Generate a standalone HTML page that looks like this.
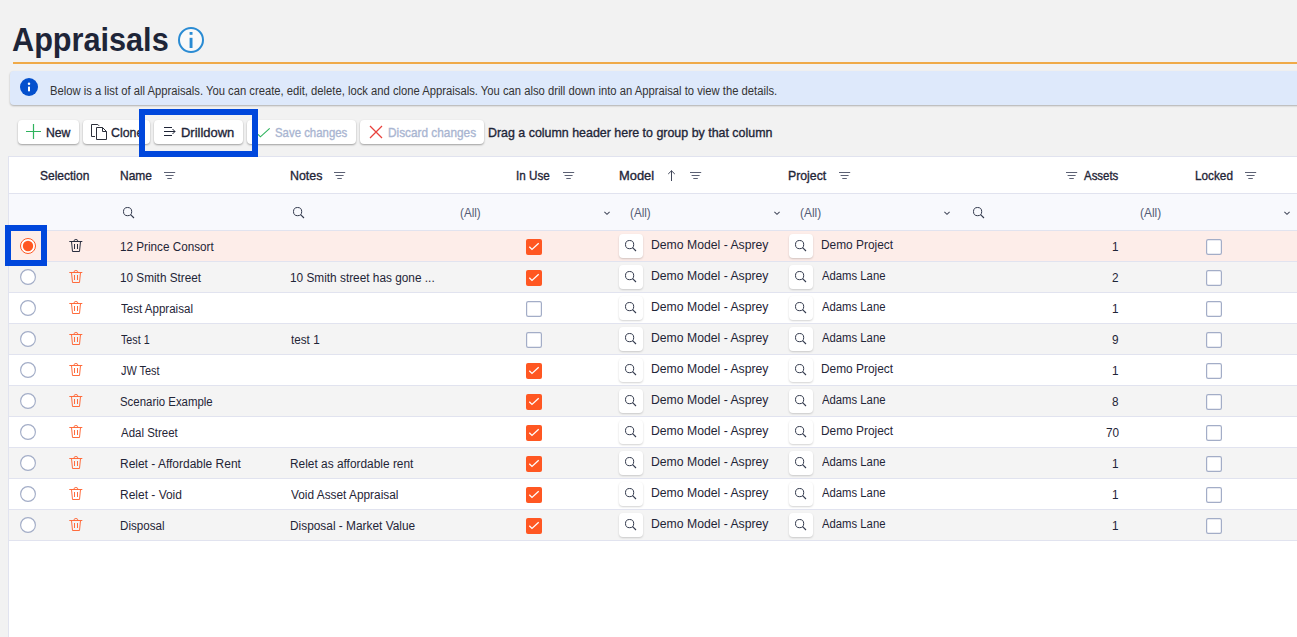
<!DOCTYPE html><html><head><meta charset="utf-8"><style>
html,body{margin:0;padding:0;}
body{width:1297px;height:637px;overflow:hidden;background:#f2f2f2;position:relative;font-family:"Liberation Sans", sans-serif;}
.t{position:absolute;white-space:nowrap;transform-origin:0 0;}
.b{position:absolute;box-sizing:border-box;}
svg.b{overflow:visible;}
</style></head><body>
<div class="t" style="left:12.10px;top:22px;font-size:34px;line-height:34px;color:#1e2538;font-weight:700;transform:scaleX(0.9012);">Appraisals</div>
<svg class="b" style="left:177px;top:26px" width="28" height="28" viewBox="0 0 28 28"><circle cx="14" cy="14" r="12" fill="#f9f9f9" stroke="#2a8bd3" stroke-width="2"/><rect x="12.6" y="6" width="2.9" height="2.8" fill="#2a8bd3"/><rect x="12.6" y="11.8" width="2.9" height="10.2" fill="#2a8bd3"/></svg>
<div class="b" style="left:13px;top:62px;width:1284px;height:2px;background:#f0aa48;"></div>
<div class="b" style="left:10px;top:71px;width:1297px;height:34px;background:#dee9fb;border-radius:4px;box-shadow:0 1px 2px rgba(0,0,0,.28);"></div>
<svg class="b" style="left:20px;top:78px" width="18" height="18" viewBox="0 0 18 18"><circle cx="9" cy="9" r="9" fill="#0450cd"/><circle cx="9" cy="5.7" r="1.25" fill="#fff"/><rect x="8" y="8.6" width="2" height="4.7" fill="#fff"/></svg>
<div class="t" style="left:49.60px;top:85px;font-size:12.5px;line-height:12.5px;color:#333;transform:scaleX(0.8990);">Below is a list of all Appraisals. You can create, edit, delete, lock and clone Appraisals. You can also drill down into an Appraisal to view the details.</div>
<div class="b" style="left:18px;top:120px;width:61px;height:24px;background:#fff;border-radius:4px;box-shadow:0 1px 2px rgba(0,0,0,.35);"></div>
<svg class="b" style="left:26px;top:124px" width="15" height="15" viewBox="0 0 15 15"><path d="M7.5 0V15M0 7.5H15" stroke="#2fb35d" stroke-width="1.2" fill="none"/></svg>
<div class="t" style="left:45.86px;top:126px;font-size:13px;line-height:13px;color:#1e2538;-webkit-text-stroke:0.35px #1e2538;transform:scaleX(0.9400);">New</div>
<div class="b" style="left:83px;top:120px;width:67px;height:24px;background:#fff;border-radius:4px;box-shadow:0 1px 2px rgba(0,0,0,.35);"></div>
<svg class="b" style="left:91px;top:124px" width="16" height="16" viewBox="0 0 16 16"><path d="M4 12.5H0.5V0.5H6.8L8.2 1.9" stroke="#2b2f3a" stroke-width="1" fill="none"/><path d="M5.5 3.5H11.5L15.5 7.5V15.5H5.5Z M11.5 3.5V7.5H15.5" stroke="#2b2f3a" stroke-width="1" fill="#fff" stroke-linejoin="miter"/></svg>
<div class="t" style="left:111.20px;top:126px;font-size:13px;line-height:13px;color:#1e2538;-webkit-text-stroke:0.35px #1e2538;transform:scaleX(0.9500);">Clone</div>
<div class="b" style="left:154px;top:120px;width:89px;height:24px;background:#fff;border-radius:4px;box-shadow:0 1px 2px rgba(0,0,0,.35);"></div>
<svg class="b" style="left:164px;top:127px" width="12" height="10" viewBox="0 0 12 10"><path d="M0 0.5H8M0 4.5H11M0 8.5H8M8.5 2L11 4.5L8.5 7" stroke="#1f2537" stroke-width="1" fill="none"/></svg>
<div class="t" style="left:181.40px;top:126px;font-size:13px;line-height:13px;color:#1e2538;-webkit-text-stroke:0.35px #1e2538;transform:scaleX(0.9962);">Drilldown</div>
<div class="b" style="left:247px;top:120px;width:109px;height:24px;background:#fff;border-radius:4px;box-shadow:0 1px 2px rgba(0,0,0,.35);"></div>
<svg class="b" style="left:257px;top:127px" width="14" height="11" viewBox="0 0 14 11"><path d="M1 7.3L3.4 9.8L12.7 1.3" stroke="#2fb35d" stroke-width="1.15" fill="none"/></svg>
<div class="t" style="left:275.00px;top:126px;font-size:13px;line-height:13px;color:#a9b5d1;-webkit-text-stroke:0.35px #a9b5d1;transform:scaleX(0.8771);">Save changes</div>
<div class="b" style="left:360px;top:120px;width:124px;height:24px;background:#fff;border-radius:4px;box-shadow:0 1px 2px rgba(0,0,0,.35);"></div>
<svg class="b" style="left:369px;top:125px" width="14" height="14" viewBox="0 0 14 14"><path d="M1 1L13 13M13 1L1 13" stroke="#e8413c" stroke-width="1.25" fill="none"/></svg>
<div class="t" style="left:387.79px;top:126px;font-size:13px;line-height:13px;color:#a9b5d1;-webkit-text-stroke:0.35px #a9b5d1;transform:scaleX(0.9094);">Discard changes</div>
<div class="t" style="left:488.14px;top:126px;font-size:13px;line-height:13px;color:#1e2538;-webkit-text-stroke:0.35px #1e2538;transform:scaleX(0.9552);">Drag a column header here to group by that column</div>
<div class="b" style="left:8px;top:156px;width:1297px;height:481px;background:#fff;border-left:1px solid #e1e3ef;border-top:1px solid #e1e3ef;"></div>
<div class="b" style="left:9px;top:193px;width:1297px;height:1px;background:#e1e3ef;"></div>
<div class="b" style="left:9px;top:194px;width:1297px;height:36px;background:#f8f9fd;"></div>
<div class="b" style="left:9px;top:230px;width:1297px;height:1px;background:#e1e3ef;"></div>
<div class="t" style="left:40.00px;top:169px;font-size:13px;line-height:13px;color:#1f2537;-webkit-text-stroke:0.35px #1f2537;transform:scaleX(0.9226);">Selection</div>
<div class="t" style="left:119.88px;top:169px;font-size:13px;line-height:13px;color:#1f2537;-webkit-text-stroke:0.35px #1f2537;transform:scaleX(0.9206);">Name</div>
<svg class="b" style="left:164px;top:172px" width="12" height="8" viewBox="0 0 12 8"><path d="M0 0.5H11.2M1.6 3.5H9.6M3.3 6.5H7.8" stroke="#5c6174" stroke-width="1" fill="none"/></svg>
<div class="t" style="left:289.55px;top:169px;font-size:13px;line-height:13px;color:#1f2537;-webkit-text-stroke:0.35px #1f2537;transform:scaleX(0.9545);">Notes</div>
<svg class="b" style="left:334px;top:172px" width="12" height="8" viewBox="0 0 12 8"><path d="M0 0.5H11.2M1.6 3.5H9.6M3.3 6.5H7.8" stroke="#5c6174" stroke-width="1" fill="none"/></svg>
<div class="t" style="left:516.40px;top:169px;font-size:13px;line-height:13px;color:#1f2537;-webkit-text-stroke:0.35px #1f2537;transform:scaleX(0.8973);">In Use</div>
<svg class="b" style="left:562.5px;top:172px" width="12" height="8" viewBox="0 0 12 8"><path d="M0 0.5H11.2M1.6 3.5H9.6M3.3 6.5H7.8" stroke="#5c6174" stroke-width="1" fill="none"/></svg>
<div class="t" style="left:618.61px;top:169px;font-size:13px;line-height:13px;color:#1f2537;-webkit-text-stroke:0.35px #1f2537;transform:scaleX(0.9912);">Model</div>
<svg class="b" style="left:667px;top:170px" width="9" height="12" viewBox="0 0 9 12"><path d="M4.5 0.6V11M1.2 4L4.5 0.8L7.8 4" stroke="#404659" stroke-width="1" fill="none"/></svg>
<svg class="b" style="left:689.5px;top:172px" width="12" height="8" viewBox="0 0 12 8"><path d="M0 0.5H11.2M1.6 3.5H9.6M3.3 6.5H7.8" stroke="#5c6174" stroke-width="1" fill="none"/></svg>
<div class="t" style="left:788.15px;top:169px;font-size:13px;line-height:13px;color:#1f2537;-webkit-text-stroke:0.35px #1f2537;transform:scaleX(0.9450);">Project</div>
<svg class="b" style="left:838.5px;top:172px" width="12" height="8" viewBox="0 0 12 8"><path d="M0 0.5H11.2M1.6 3.5H9.6M3.3 6.5H7.8" stroke="#5c6174" stroke-width="1" fill="none"/></svg>
<svg class="b" style="left:1065.5px;top:172px" width="12" height="8" viewBox="0 0 12 8"><path d="M0 0.5H11.2M1.6 3.5H9.6M3.3 6.5H7.8" stroke="#5c6174" stroke-width="1" fill="none"/></svg>
<div class="t" style="left:1084.00px;top:169px;font-size:13px;line-height:13px;color:#1f2537;-webkit-text-stroke:0.35px #1f2537;transform:scaleX(0.8795);">Assets</div>
<div class="t" style="left:1194.60px;top:169px;font-size:13px;line-height:13px;color:#1f2537;-webkit-text-stroke:0.35px #1f2537;transform:scaleX(0.9049);">Locked</div>
<svg class="b" style="left:1245px;top:172px" width="12" height="8" viewBox="0 0 12 8"><path d="M0 0.5H11.2M1.6 3.5H9.6M3.3 6.5H7.8" stroke="#5c6174" stroke-width="1" fill="none"/></svg>
<svg class="b" style="left:123px;top:207px" width="11" height="11" viewBox="0 0 11 11"><circle cx="4.6" cy="4.6" r="4.1" stroke="#333a4d" stroke-width="1" fill="none"/><path d="M7.6 7.6L11 11" stroke="#333a4d" stroke-width="1.1" fill="none"/></svg>
<svg class="b" style="left:293px;top:207px" width="11" height="11" viewBox="0 0 11 11"><circle cx="4.6" cy="4.6" r="4.1" stroke="#333a4d" stroke-width="1" fill="none"/><path d="M7.6 7.6L11 11" stroke="#333a4d" stroke-width="1.1" fill="none"/></svg>
<div class="t" style="left:459.77px;top:207px;font-size:12.5px;line-height:12.5px;color:#535b75;transform:scaleX(0.9333);">(All)</div>
<svg class="b" style="left:604px;top:210.5px" width="7" height="4" viewBox="0 0 7 4"><path d="M0.4 0.9L3 3.3L5.6 0.9" stroke="#404659" stroke-width="1.05" fill="none"/></svg>
<div class="t" style="left:629.57px;top:207px;font-size:12.5px;line-height:12.5px;color:#535b75;transform:scaleX(0.9333);">(All)</div>
<svg class="b" style="left:774px;top:210.5px" width="7" height="4" viewBox="0 0 7 4"><path d="M0.4 0.9L3 3.3L5.6 0.9" stroke="#404659" stroke-width="1.05" fill="none"/></svg>
<div class="t" style="left:799.55px;top:207px;font-size:12.5px;line-height:12.5px;color:#535b75;transform:scaleX(0.9524);">(All)</div>
<svg class="b" style="left:943.5px;top:210.5px" width="7" height="4" viewBox="0 0 7 4"><path d="M0.4 0.9L3 3.3L5.6 0.9" stroke="#404659" stroke-width="1.05" fill="none"/></svg>
<svg class="b" style="left:973px;top:207px" width="11" height="11" viewBox="0 0 11 11"><circle cx="4.6" cy="4.6" r="4.1" stroke="#333a4d" stroke-width="1" fill="none"/><path d="M7.6 7.6L11 11" stroke="#333a4d" stroke-width="1.1" fill="none"/></svg>
<div class="t" style="left:1139.55px;top:207px;font-size:12.5px;line-height:12.5px;color:#535b75;transform:scaleX(0.9524);">(All)</div>
<svg class="b" style="left:1284px;top:210.5px" width="7" height="4" viewBox="0 0 7 4"><path d="M0.4 0.9L3 3.3L5.6 0.9" stroke="#404659" stroke-width="1.05" fill="none"/></svg>
<div class="b" style="left:9px;top:231px;width:1297px;height:30px;background:#fdede9;"></div>
<div class="b" style="left:9px;top:261px;width:1297px;height:1px;background:#e1e3ef;"></div>
<svg class="b" style="left:20px;top:238px" width="16" height="16" viewBox="0 0 16 16"><circle cx="8" cy="8" r="7.5" fill="#fff" stroke="#ff5722" stroke-width="1"/><circle cx="8" cy="8" r="5.2" fill="#ff5722"/></svg>
<svg class="b" style="left:69px;top:239px" width="14" height="14" viewBox="0 0 14 14"><path d="M0.3 2.5H13.3M5.1 2.5V1.8Q5.1 0.5 6.9 0.5Q8.7 0.5 8.7 1.8V2.5M2.5 2.6L3.5 12.5H10.5L11.5 2.6M5.5 5V10M8.5 5V10" stroke="#1f2537" stroke-width="0.95" fill="none"/></svg>
<div class="t" style="left:120.06px;top:241px;font-size:12.5px;line-height:12.5px;color:#1f2537;transform:scaleX(0.9364);">12 Prince Consort</div>
<svg class="b" style="left:526px;top:239px" width="16" height="16" viewBox="0 0 16 16"><rect x="0" y="0" width="16" height="16" rx="2" fill="#ff5722"/><path d="M3.3 7.7L6 10.4L12.7 4.2" stroke="#fff" stroke-width="1.3" fill="none"/></svg>
<div class="b" style="left:619px;top:234px;width:24px;height:24px;background:#fff;border-radius:4px;box-shadow:0 1px 2px rgba(0,0,0,.18);"></div>
<svg class="b" style="left:625px;top:240px" width="11" height="11" viewBox="0 0 11 11"><circle cx="4.6" cy="4.6" r="4.1" stroke="#333a4d" stroke-width="1" fill="none"/><path d="M7.6 7.6L11 11" stroke="#333a4d" stroke-width="1.1" fill="none"/></svg>
<div class="t" style="left:651.02px;top:239px;font-size:12.5px;line-height:12.5px;color:#1f2537;transform:scaleX(0.9773);">Demo Model - Asprey</div>
<div class="b" style="left:789px;top:234px;width:24px;height:24px;background:#fff;border-radius:4px;box-shadow:0 1px 2px rgba(0,0,0,.18);"></div>
<svg class="b" style="left:795px;top:240px" width="11" height="11" viewBox="0 0 11 11"><circle cx="4.6" cy="4.6" r="4.1" stroke="#333a4d" stroke-width="1" fill="none"/><path d="M7.6 7.6L11 11" stroke="#333a4d" stroke-width="1.1" fill="none"/></svg>
<div class="t" style="left:821.05px;top:239px;font-size:12.5px;line-height:12.5px;color:#1f2537;transform:scaleX(0.9520);">Demo Project</div>
<div class="t" style="left:1112.42px;top:241px;font-size:12.5px;line-height:12.5px;color:#1f2537;transform:scaleX(0.9400);">1</div>
<svg class="b" style="left:1206px;top:239px" width="16" height="16" viewBox="0 0 16 16"><rect x="0.6" y="0.6" width="14.8" height="14.8" rx="1.6" fill="#fff" stroke="#a3adc7" stroke-width="1.2"/></svg>
<div class="b" style="left:9px;top:262px;width:1297px;height:30px;background:#f4f4f4;"></div>
<div class="b" style="left:9px;top:292px;width:1297px;height:1px;background:#e1e3ef;"></div>
<svg class="b" style="left:20px;top:269px" width="16" height="16" viewBox="0 0 16 16"><circle cx="8" cy="8" r="7.4" fill="#fff" stroke="#a3adc7" stroke-width="1.15"/></svg>
<svg class="b" style="left:69px;top:270px" width="14" height="14" viewBox="0 0 14 14"><path d="M0.3 2.5H13.3M5.1 2.5V1.8Q5.1 0.5 6.9 0.5Q8.7 0.5 8.7 1.8V2.5M2.5 2.6L3.5 12.5H10.5L11.5 2.6M5.5 5V10M8.5 5V10" stroke="#ff6433" stroke-width="0.95" fill="none"/></svg>
<div class="t" style="left:120.06px;top:272px;font-size:12.5px;line-height:12.5px;color:#1f2537;transform:scaleX(0.9412);">10 Smith Street</div>
<div class="t" style="left:289.55px;top:272px;font-size:12.5px;line-height:12.5px;color:#1f2537;transform:scaleX(0.9464);">10 Smith street has gone ...</div>
<svg class="b" style="left:526px;top:270px" width="16" height="16" viewBox="0 0 16 16"><rect x="0" y="0" width="16" height="16" rx="2" fill="#ff5722"/><path d="M3.3 7.7L6 10.4L12.7 4.2" stroke="#fff" stroke-width="1.3" fill="none"/></svg>
<div class="b" style="left:619px;top:265px;width:24px;height:24px;background:#fff;border-radius:4px;box-shadow:0 1px 2px rgba(0,0,0,.18);"></div>
<svg class="b" style="left:625px;top:271px" width="11" height="11" viewBox="0 0 11 11"><circle cx="4.6" cy="4.6" r="4.1" stroke="#333a4d" stroke-width="1" fill="none"/><path d="M7.6 7.6L11 11" stroke="#333a4d" stroke-width="1.1" fill="none"/></svg>
<div class="t" style="left:651.02px;top:270px;font-size:12.5px;line-height:12.5px;color:#1f2537;transform:scaleX(0.9773);">Demo Model - Asprey</div>
<div class="b" style="left:789px;top:265px;width:24px;height:24px;background:#fff;border-radius:4px;box-shadow:0 1px 2px rgba(0,0,0,.18);"></div>
<svg class="b" style="left:795px;top:271px" width="11" height="11" viewBox="0 0 11 11"><circle cx="4.6" cy="4.6" r="4.1" stroke="#333a4d" stroke-width="1" fill="none"/><path d="M7.6 7.6L11 11" stroke="#333a4d" stroke-width="1.1" fill="none"/></svg>
<div class="t" style="left:822.00px;top:270px;font-size:12.5px;line-height:12.5px;color:#1f2537;transform:scaleX(0.9043);">Adams Lane</div>
<div class="t" style="left:1112.42px;top:272px;font-size:12.5px;line-height:12.5px;color:#1f2537;transform:scaleX(0.9400);">2</div>
<svg class="b" style="left:1206px;top:270px" width="16" height="16" viewBox="0 0 16 16"><rect x="0.6" y="0.6" width="14.8" height="14.8" rx="1.6" fill="#fff" stroke="#a3adc7" stroke-width="1.2"/></svg>
<div class="b" style="left:9px;top:293px;width:1297px;height:30px;background:#ffffff;"></div>
<div class="b" style="left:9px;top:323px;width:1297px;height:1px;background:#e1e3ef;"></div>
<svg class="b" style="left:20px;top:300px" width="16" height="16" viewBox="0 0 16 16"><circle cx="8" cy="8" r="7.4" fill="#fff" stroke="#a3adc7" stroke-width="1.15"/></svg>
<svg class="b" style="left:69px;top:301px" width="14" height="14" viewBox="0 0 14 14"><path d="M0.3 2.5H13.3M5.1 2.5V1.8Q5.1 0.5 6.9 0.5Q8.7 0.5 8.7 1.8V2.5M2.5 2.6L3.5 12.5H10.5L11.5 2.6M5.5 5V10M8.5 5V10" stroke="#ff6433" stroke-width="0.95" fill="none"/></svg>
<div class="t" style="left:121.00px;top:303px;font-size:12.5px;line-height:12.5px;color:#1f2537;transform:scaleX(0.9247);">Test Appraisal</div>
<svg class="b" style="left:526px;top:301px" width="16" height="16" viewBox="0 0 16 16"><rect x="0.6" y="0.6" width="14.8" height="14.8" rx="1.6" fill="#fff" stroke="#a3adc7" stroke-width="1.2"/></svg>
<div class="b" style="left:619px;top:296px;width:24px;height:24px;background:#fff;border-radius:4px;box-shadow:0 1px 2px rgba(0,0,0,.18);"></div>
<svg class="b" style="left:625px;top:302px" width="11" height="11" viewBox="0 0 11 11"><circle cx="4.6" cy="4.6" r="4.1" stroke="#333a4d" stroke-width="1" fill="none"/><path d="M7.6 7.6L11 11" stroke="#333a4d" stroke-width="1.1" fill="none"/></svg>
<div class="t" style="left:651.02px;top:301px;font-size:12.5px;line-height:12.5px;color:#1f2537;transform:scaleX(0.9773);">Demo Model - Asprey</div>
<div class="b" style="left:789px;top:296px;width:24px;height:24px;background:#fff;border-radius:4px;box-shadow:0 1px 2px rgba(0,0,0,.18);"></div>
<svg class="b" style="left:795px;top:302px" width="11" height="11" viewBox="0 0 11 11"><circle cx="4.6" cy="4.6" r="4.1" stroke="#333a4d" stroke-width="1" fill="none"/><path d="M7.6 7.6L11 11" stroke="#333a4d" stroke-width="1.1" fill="none"/></svg>
<div class="t" style="left:822.00px;top:301px;font-size:12.5px;line-height:12.5px;color:#1f2537;transform:scaleX(0.9043);">Adams Lane</div>
<div class="t" style="left:1112.42px;top:303px;font-size:12.5px;line-height:12.5px;color:#1f2537;transform:scaleX(0.9400);">1</div>
<svg class="b" style="left:1206px;top:301px" width="16" height="16" viewBox="0 0 16 16"><rect x="0.6" y="0.6" width="14.8" height="14.8" rx="1.6" fill="#fff" stroke="#a3adc7" stroke-width="1.2"/></svg>
<div class="b" style="left:9px;top:324px;width:1297px;height:30px;background:#f4f4f4;"></div>
<div class="b" style="left:9px;top:354px;width:1297px;height:1px;background:#e1e3ef;"></div>
<svg class="b" style="left:20px;top:331px" width="16" height="16" viewBox="0 0 16 16"><circle cx="8" cy="8" r="7.4" fill="#fff" stroke="#a3adc7" stroke-width="1.15"/></svg>
<svg class="b" style="left:69px;top:332px" width="14" height="14" viewBox="0 0 14 14"><path d="M0.3 2.5H13.3M5.1 2.5V1.8Q5.1 0.5 6.9 0.5Q8.7 0.5 8.7 1.8V2.5M2.5 2.6L3.5 12.5H10.5L11.5 2.6M5.5 5V10M8.5 5V10" stroke="#ff6433" stroke-width="0.95" fill="none"/></svg>
<div class="t" style="left:121.00px;top:334px;font-size:12.5px;line-height:12.5px;color:#1f2537;transform:scaleX(0.8576);">Test 1</div>
<div class="t" style="left:290.50px;top:334px;font-size:12.5px;line-height:12.5px;color:#1f2537;transform:scaleX(0.9367);">test 1</div>
<svg class="b" style="left:526px;top:332px" width="16" height="16" viewBox="0 0 16 16"><rect x="0.6" y="0.6" width="14.8" height="14.8" rx="1.6" fill="#fff" stroke="#a3adc7" stroke-width="1.2"/></svg>
<div class="b" style="left:619px;top:327px;width:24px;height:24px;background:#fff;border-radius:4px;box-shadow:0 1px 2px rgba(0,0,0,.18);"></div>
<svg class="b" style="left:625px;top:333px" width="11" height="11" viewBox="0 0 11 11"><circle cx="4.6" cy="4.6" r="4.1" stroke="#333a4d" stroke-width="1" fill="none"/><path d="M7.6 7.6L11 11" stroke="#333a4d" stroke-width="1.1" fill="none"/></svg>
<div class="t" style="left:651.02px;top:332px;font-size:12.5px;line-height:12.5px;color:#1f2537;transform:scaleX(0.9773);">Demo Model - Asprey</div>
<div class="b" style="left:789px;top:327px;width:24px;height:24px;background:#fff;border-radius:4px;box-shadow:0 1px 2px rgba(0,0,0,.18);"></div>
<svg class="b" style="left:795px;top:333px" width="11" height="11" viewBox="0 0 11 11"><circle cx="4.6" cy="4.6" r="4.1" stroke="#333a4d" stroke-width="1" fill="none"/><path d="M7.6 7.6L11 11" stroke="#333a4d" stroke-width="1.1" fill="none"/></svg>
<div class="t" style="left:822.00px;top:332px;font-size:12.5px;line-height:12.5px;color:#1f2537;transform:scaleX(0.9043);">Adams Lane</div>
<div class="t" style="left:1112.42px;top:334px;font-size:12.5px;line-height:12.5px;color:#1f2537;transform:scaleX(0.9400);">9</div>
<svg class="b" style="left:1206px;top:332px" width="16" height="16" viewBox="0 0 16 16"><rect x="0.6" y="0.6" width="14.8" height="14.8" rx="1.6" fill="#fff" stroke="#a3adc7" stroke-width="1.2"/></svg>
<div class="b" style="left:9px;top:355px;width:1297px;height:30px;background:#ffffff;"></div>
<div class="b" style="left:9px;top:385px;width:1297px;height:1px;background:#e1e3ef;"></div>
<svg class="b" style="left:20px;top:362px" width="16" height="16" viewBox="0 0 16 16"><circle cx="8" cy="8" r="7.4" fill="#fff" stroke="#a3adc7" stroke-width="1.15"/></svg>
<svg class="b" style="left:69px;top:363px" width="14" height="14" viewBox="0 0 14 14"><path d="M0.3 2.5H13.3M5.1 2.5V1.8Q5.1 0.5 6.9 0.5Q8.7 0.5 8.7 1.8V2.5M2.5 2.6L3.5 12.5H10.5L11.5 2.6M5.5 5V10M8.5 5V10" stroke="#ff6433" stroke-width="0.95" fill="none"/></svg>
<div class="t" style="left:121.00px;top:365px;font-size:12.5px;line-height:12.5px;color:#1f2537;transform:scaleX(0.8727);">JW Test</div>
<svg class="b" style="left:526px;top:363px" width="16" height="16" viewBox="0 0 16 16"><rect x="0" y="0" width="16" height="16" rx="2" fill="#ff5722"/><path d="M3.3 7.7L6 10.4L12.7 4.2" stroke="#fff" stroke-width="1.3" fill="none"/></svg>
<div class="b" style="left:619px;top:358px;width:24px;height:24px;background:#fff;border-radius:4px;box-shadow:0 1px 2px rgba(0,0,0,.18);"></div>
<svg class="b" style="left:625px;top:364px" width="11" height="11" viewBox="0 0 11 11"><circle cx="4.6" cy="4.6" r="4.1" stroke="#333a4d" stroke-width="1" fill="none"/><path d="M7.6 7.6L11 11" stroke="#333a4d" stroke-width="1.1" fill="none"/></svg>
<div class="t" style="left:651.02px;top:363px;font-size:12.5px;line-height:12.5px;color:#1f2537;transform:scaleX(0.9773);">Demo Model - Asprey</div>
<div class="b" style="left:789px;top:358px;width:24px;height:24px;background:#fff;border-radius:4px;box-shadow:0 1px 2px rgba(0,0,0,.18);"></div>
<svg class="b" style="left:795px;top:364px" width="11" height="11" viewBox="0 0 11 11"><circle cx="4.6" cy="4.6" r="4.1" stroke="#333a4d" stroke-width="1" fill="none"/><path d="M7.6 7.6L11 11" stroke="#333a4d" stroke-width="1.1" fill="none"/></svg>
<div class="t" style="left:821.05px;top:363px;font-size:12.5px;line-height:12.5px;color:#1f2537;transform:scaleX(0.9520);">Demo Project</div>
<div class="t" style="left:1112.42px;top:365px;font-size:12.5px;line-height:12.5px;color:#1f2537;transform:scaleX(0.9400);">1</div>
<svg class="b" style="left:1206px;top:363px" width="16" height="16" viewBox="0 0 16 16"><rect x="0.6" y="0.6" width="14.8" height="14.8" rx="1.6" fill="#fff" stroke="#a3adc7" stroke-width="1.2"/></svg>
<div class="b" style="left:9px;top:386px;width:1297px;height:30px;background:#f4f4f4;"></div>
<div class="b" style="left:9px;top:416px;width:1297px;height:1px;background:#e1e3ef;"></div>
<svg class="b" style="left:20px;top:393px" width="16" height="16" viewBox="0 0 16 16"><circle cx="8" cy="8" r="7.4" fill="#fff" stroke="#a3adc7" stroke-width="1.15"/></svg>
<svg class="b" style="left:69px;top:394px" width="14" height="14" viewBox="0 0 14 14"><path d="M0.3 2.5H13.3M5.1 2.5V1.8Q5.1 0.5 6.9 0.5Q8.7 0.5 8.7 1.8V2.5M2.5 2.6L3.5 12.5H10.5L11.5 2.6M5.5 5V10M8.5 5V10" stroke="#ff6433" stroke-width="0.95" fill="none"/></svg>
<div class="t" style="left:120.09px;top:396px;font-size:12.5px;line-height:12.5px;color:#1f2537;transform:scaleX(0.9140);">Scenario Example</div>
<svg class="b" style="left:526px;top:394px" width="16" height="16" viewBox="0 0 16 16"><rect x="0" y="0" width="16" height="16" rx="2" fill="#ff5722"/><path d="M3.3 7.7L6 10.4L12.7 4.2" stroke="#fff" stroke-width="1.3" fill="none"/></svg>
<div class="b" style="left:619px;top:389px;width:24px;height:24px;background:#fff;border-radius:4px;box-shadow:0 1px 2px rgba(0,0,0,.18);"></div>
<svg class="b" style="left:625px;top:395px" width="11" height="11" viewBox="0 0 11 11"><circle cx="4.6" cy="4.6" r="4.1" stroke="#333a4d" stroke-width="1" fill="none"/><path d="M7.6 7.6L11 11" stroke="#333a4d" stroke-width="1.1" fill="none"/></svg>
<div class="t" style="left:651.02px;top:394px;font-size:12.5px;line-height:12.5px;color:#1f2537;transform:scaleX(0.9773);">Demo Model - Asprey</div>
<div class="b" style="left:789px;top:389px;width:24px;height:24px;background:#fff;border-radius:4px;box-shadow:0 1px 2px rgba(0,0,0,.18);"></div>
<svg class="b" style="left:795px;top:395px" width="11" height="11" viewBox="0 0 11 11"><circle cx="4.6" cy="4.6" r="4.1" stroke="#333a4d" stroke-width="1" fill="none"/><path d="M7.6 7.6L11 11" stroke="#333a4d" stroke-width="1.1" fill="none"/></svg>
<div class="t" style="left:822.00px;top:394px;font-size:12.5px;line-height:12.5px;color:#1f2537;transform:scaleX(0.9043);">Adams Lane</div>
<div class="t" style="left:1112.42px;top:396px;font-size:12.5px;line-height:12.5px;color:#1f2537;transform:scaleX(0.9400);">8</div>
<svg class="b" style="left:1206px;top:394px" width="16" height="16" viewBox="0 0 16 16"><rect x="0.6" y="0.6" width="14.8" height="14.8" rx="1.6" fill="#fff" stroke="#a3adc7" stroke-width="1.2"/></svg>
<div class="b" style="left:9px;top:417px;width:1297px;height:30px;background:#ffffff;"></div>
<div class="b" style="left:9px;top:447px;width:1297px;height:1px;background:#e1e3ef;"></div>
<svg class="b" style="left:20px;top:424px" width="16" height="16" viewBox="0 0 16 16"><circle cx="8" cy="8" r="7.4" fill="#fff" stroke="#a3adc7" stroke-width="1.15"/></svg>
<svg class="b" style="left:69px;top:425px" width="14" height="14" viewBox="0 0 14 14"><path d="M0.3 2.5H13.3M5.1 2.5V1.8Q5.1 0.5 6.9 0.5Q8.7 0.5 8.7 1.8V2.5M2.5 2.6L3.5 12.5H10.5L11.5 2.6M5.5 5V10M8.5 5V10" stroke="#ff6433" stroke-width="0.95" fill="none"/></svg>
<div class="t" style="left:121.00px;top:427px;font-size:12.5px;line-height:12.5px;color:#1f2537;transform:scaleX(0.9177);">Adal Street</div>
<svg class="b" style="left:526px;top:425px" width="16" height="16" viewBox="0 0 16 16"><rect x="0" y="0" width="16" height="16" rx="2" fill="#ff5722"/><path d="M3.3 7.7L6 10.4L12.7 4.2" stroke="#fff" stroke-width="1.3" fill="none"/></svg>
<div class="b" style="left:619px;top:420px;width:24px;height:24px;background:#fff;border-radius:4px;box-shadow:0 1px 2px rgba(0,0,0,.18);"></div>
<svg class="b" style="left:625px;top:426px" width="11" height="11" viewBox="0 0 11 11"><circle cx="4.6" cy="4.6" r="4.1" stroke="#333a4d" stroke-width="1" fill="none"/><path d="M7.6 7.6L11 11" stroke="#333a4d" stroke-width="1.1" fill="none"/></svg>
<div class="t" style="left:651.02px;top:425px;font-size:12.5px;line-height:12.5px;color:#1f2537;transform:scaleX(0.9773);">Demo Model - Asprey</div>
<div class="b" style="left:789px;top:420px;width:24px;height:24px;background:#fff;border-radius:4px;box-shadow:0 1px 2px rgba(0,0,0,.18);"></div>
<svg class="b" style="left:795px;top:426px" width="11" height="11" viewBox="0 0 11 11"><circle cx="4.6" cy="4.6" r="4.1" stroke="#333a4d" stroke-width="1" fill="none"/><path d="M7.6 7.6L11 11" stroke="#333a4d" stroke-width="1.1" fill="none"/></svg>
<div class="t" style="left:821.05px;top:425px;font-size:12.5px;line-height:12.5px;color:#1f2537;transform:scaleX(0.9520);">Demo Project</div>
<div class="t" style="left:1105.84px;top:427px;font-size:12.5px;line-height:12.5px;color:#1f2537;transform:scaleX(0.9400);">70</div>
<svg class="b" style="left:1206px;top:425px" width="16" height="16" viewBox="0 0 16 16"><rect x="0.6" y="0.6" width="14.8" height="14.8" rx="1.6" fill="#fff" stroke="#a3adc7" stroke-width="1.2"/></svg>
<div class="b" style="left:9px;top:448px;width:1297px;height:30px;background:#f4f4f4;"></div>
<div class="b" style="left:9px;top:478px;width:1297px;height:1px;background:#e1e3ef;"></div>
<svg class="b" style="left:20px;top:455px" width="16" height="16" viewBox="0 0 16 16"><circle cx="8" cy="8" r="7.4" fill="#fff" stroke="#a3adc7" stroke-width="1.15"/></svg>
<svg class="b" style="left:69px;top:456px" width="14" height="14" viewBox="0 0 14 14"><path d="M0.3 2.5H13.3M5.1 2.5V1.8Q5.1 0.5 6.9 0.5Q8.7 0.5 8.7 1.8V2.5M2.5 2.6L3.5 12.5H10.5L11.5 2.6M5.5 5V10M8.5 5V10" stroke="#ff6433" stroke-width="0.95" fill="none"/></svg>
<div class="t" style="left:120.04px;top:458px;font-size:12.5px;line-height:12.5px;color:#1f2537;transform:scaleX(0.9576);">Relet - Affordable Rent</div>
<div class="t" style="left:289.55px;top:458px;font-size:12.5px;line-height:12.5px;color:#1f2537;transform:scaleX(0.9512);">Relet as affordable rent</div>
<svg class="b" style="left:526px;top:456px" width="16" height="16" viewBox="0 0 16 16"><rect x="0" y="0" width="16" height="16" rx="2" fill="#ff5722"/><path d="M3.3 7.7L6 10.4L12.7 4.2" stroke="#fff" stroke-width="1.3" fill="none"/></svg>
<div class="b" style="left:619px;top:451px;width:24px;height:24px;background:#fff;border-radius:4px;box-shadow:0 1px 2px rgba(0,0,0,.18);"></div>
<svg class="b" style="left:625px;top:457px" width="11" height="11" viewBox="0 0 11 11"><circle cx="4.6" cy="4.6" r="4.1" stroke="#333a4d" stroke-width="1" fill="none"/><path d="M7.6 7.6L11 11" stroke="#333a4d" stroke-width="1.1" fill="none"/></svg>
<div class="t" style="left:651.02px;top:456px;font-size:12.5px;line-height:12.5px;color:#1f2537;transform:scaleX(0.9773);">Demo Model - Asprey</div>
<div class="b" style="left:789px;top:451px;width:24px;height:24px;background:#fff;border-radius:4px;box-shadow:0 1px 2px rgba(0,0,0,.18);"></div>
<svg class="b" style="left:795px;top:457px" width="11" height="11" viewBox="0 0 11 11"><circle cx="4.6" cy="4.6" r="4.1" stroke="#333a4d" stroke-width="1" fill="none"/><path d="M7.6 7.6L11 11" stroke="#333a4d" stroke-width="1.1" fill="none"/></svg>
<div class="t" style="left:822.00px;top:456px;font-size:12.5px;line-height:12.5px;color:#1f2537;transform:scaleX(0.9043);">Adams Lane</div>
<div class="t" style="left:1112.42px;top:458px;font-size:12.5px;line-height:12.5px;color:#1f2537;transform:scaleX(0.9400);">1</div>
<svg class="b" style="left:1206px;top:456px" width="16" height="16" viewBox="0 0 16 16"><rect x="0.6" y="0.6" width="14.8" height="14.8" rx="1.6" fill="#fff" stroke="#a3adc7" stroke-width="1.2"/></svg>
<div class="b" style="left:9px;top:479px;width:1297px;height:30px;background:#ffffff;"></div>
<div class="b" style="left:9px;top:509px;width:1297px;height:1px;background:#e1e3ef;"></div>
<svg class="b" style="left:20px;top:486px" width="16" height="16" viewBox="0 0 16 16"><circle cx="8" cy="8" r="7.4" fill="#fff" stroke="#a3adc7" stroke-width="1.15"/></svg>
<svg class="b" style="left:69px;top:487px" width="14" height="14" viewBox="0 0 14 14"><path d="M0.3 2.5H13.3M5.1 2.5V1.8Q5.1 0.5 6.9 0.5Q8.7 0.5 8.7 1.8V2.5M2.5 2.6L3.5 12.5H10.5L11.5 2.6M5.5 5V10M8.5 5V10" stroke="#ff6433" stroke-width="0.95" fill="none"/></svg>
<div class="t" style="left:120.04px;top:489px;font-size:12.5px;line-height:12.5px;color:#1f2537;transform:scaleX(0.9587);">Relet - Void</div>
<div class="t" style="left:290.50px;top:489px;font-size:12.5px;line-height:12.5px;color:#1f2537;transform:scaleX(0.9487);">Void Asset Appraisal</div>
<svg class="b" style="left:526px;top:487px" width="16" height="16" viewBox="0 0 16 16"><rect x="0" y="0" width="16" height="16" rx="2" fill="#ff5722"/><path d="M3.3 7.7L6 10.4L12.7 4.2" stroke="#fff" stroke-width="1.3" fill="none"/></svg>
<div class="b" style="left:619px;top:482px;width:24px;height:24px;background:#fff;border-radius:4px;box-shadow:0 1px 2px rgba(0,0,0,.18);"></div>
<svg class="b" style="left:625px;top:488px" width="11" height="11" viewBox="0 0 11 11"><circle cx="4.6" cy="4.6" r="4.1" stroke="#333a4d" stroke-width="1" fill="none"/><path d="M7.6 7.6L11 11" stroke="#333a4d" stroke-width="1.1" fill="none"/></svg>
<div class="t" style="left:651.02px;top:487px;font-size:12.5px;line-height:12.5px;color:#1f2537;transform:scaleX(0.9773);">Demo Model - Asprey</div>
<div class="b" style="left:789px;top:482px;width:24px;height:24px;background:#fff;border-radius:4px;box-shadow:0 1px 2px rgba(0,0,0,.18);"></div>
<svg class="b" style="left:795px;top:488px" width="11" height="11" viewBox="0 0 11 11"><circle cx="4.6" cy="4.6" r="4.1" stroke="#333a4d" stroke-width="1" fill="none"/><path d="M7.6 7.6L11 11" stroke="#333a4d" stroke-width="1.1" fill="none"/></svg>
<div class="t" style="left:822.00px;top:487px;font-size:12.5px;line-height:12.5px;color:#1f2537;transform:scaleX(0.9043);">Adams Lane</div>
<div class="t" style="left:1112.42px;top:489px;font-size:12.5px;line-height:12.5px;color:#1f2537;transform:scaleX(0.9400);">1</div>
<svg class="b" style="left:1206px;top:487px" width="16" height="16" viewBox="0 0 16 16"><rect x="0.6" y="0.6" width="14.8" height="14.8" rx="1.6" fill="#fff" stroke="#a3adc7" stroke-width="1.2"/></svg>
<div class="b" style="left:9px;top:510px;width:1297px;height:30px;background:#f4f4f4;"></div>
<div class="b" style="left:9px;top:540px;width:1297px;height:1px;background:#e1e3ef;"></div>
<svg class="b" style="left:20px;top:517px" width="16" height="16" viewBox="0 0 16 16"><circle cx="8" cy="8" r="7.4" fill="#fff" stroke="#a3adc7" stroke-width="1.15"/></svg>
<svg class="b" style="left:69px;top:518px" width="14" height="14" viewBox="0 0 14 14"><path d="M0.3 2.5H13.3M5.1 2.5V1.8Q5.1 0.5 6.9 0.5Q8.7 0.5 8.7 1.8V2.5M2.5 2.6L3.5 12.5H10.5L11.5 2.6M5.5 5V10M8.5 5V10" stroke="#ff6433" stroke-width="0.95" fill="none"/></svg>
<div class="t" style="left:120.07px;top:520px;font-size:12.5px;line-height:12.5px;color:#1f2537;transform:scaleX(0.9298);">Disposal</div>
<div class="t" style="left:289.55px;top:520px;font-size:12.5px;line-height:12.5px;color:#1f2537;transform:scaleX(0.9504);">Disposal - Market Value</div>
<svg class="b" style="left:526px;top:518px" width="16" height="16" viewBox="0 0 16 16"><rect x="0" y="0" width="16" height="16" rx="2" fill="#ff5722"/><path d="M3.3 7.7L6 10.4L12.7 4.2" stroke="#fff" stroke-width="1.3" fill="none"/></svg>
<div class="b" style="left:619px;top:513px;width:24px;height:24px;background:#fff;border-radius:4px;box-shadow:0 1px 2px rgba(0,0,0,.18);"></div>
<svg class="b" style="left:625px;top:519px" width="11" height="11" viewBox="0 0 11 11"><circle cx="4.6" cy="4.6" r="4.1" stroke="#333a4d" stroke-width="1" fill="none"/><path d="M7.6 7.6L11 11" stroke="#333a4d" stroke-width="1.1" fill="none"/></svg>
<div class="t" style="left:651.02px;top:518px;font-size:12.5px;line-height:12.5px;color:#1f2537;transform:scaleX(0.9773);">Demo Model - Asprey</div>
<div class="b" style="left:789px;top:513px;width:24px;height:24px;background:#fff;border-radius:4px;box-shadow:0 1px 2px rgba(0,0,0,.18);"></div>
<svg class="b" style="left:795px;top:519px" width="11" height="11" viewBox="0 0 11 11"><circle cx="4.6" cy="4.6" r="4.1" stroke="#333a4d" stroke-width="1" fill="none"/><path d="M7.6 7.6L11 11" stroke="#333a4d" stroke-width="1.1" fill="none"/></svg>
<div class="t" style="left:822.00px;top:518px;font-size:12.5px;line-height:12.5px;color:#1f2537;transform:scaleX(0.9043);">Adams Lane</div>
<div class="t" style="left:1112.42px;top:520px;font-size:12.5px;line-height:12.5px;color:#1f2537;transform:scaleX(0.9400);">1</div>
<svg class="b" style="left:1206px;top:518px" width="16" height="16" viewBox="0 0 16 16"><rect x="0.6" y="0.6" width="14.8" height="14.8" rx="1.6" fill="#fff" stroke="#a3adc7" stroke-width="1.2"/></svg>
<div class="b" style="left:139px;top:109px;width:119px;height:48px;border:6px solid #0047dc;"></div>
<div class="b" style="left:5px;top:225px;width:42px;height:41px;border:6px solid #0047dc;"></div>
</body></html>
